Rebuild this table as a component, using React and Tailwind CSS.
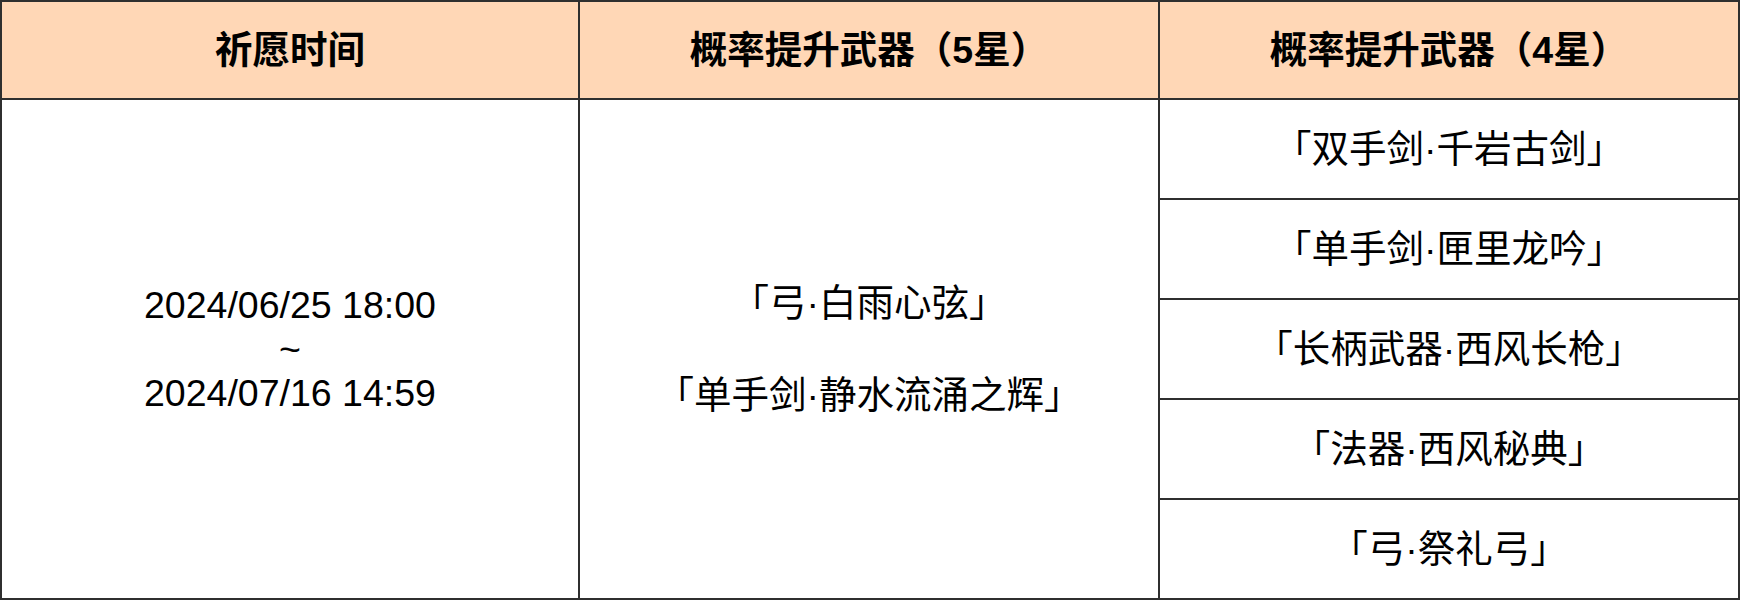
import React from 'react'

const font = { fontFamily: '"Liberation Sans", "Noto Sans CJK SC", sans-serif' }

const fourStar = [
  '「双手剑·千岩古剑」',
  '「单手剑·匣里龙吟」',
  '「长柄武器·西风长枪」',
  '「法器·西风秘典」',
  '「弓·祭礼弓」',
]

const App = () => {
  return (
    <div
      style={font}
      className="w-[1740px] h-[600px] border-2 border-[#2f2f2f] flex flex-col text-black bg-white"
    >
      <div className="h-[98px] border-b-2 border-[#2f2f2f] bg-[#ffd7b6] grid grid-cols-[578px_580px_1fr] text-[37.5px] font-bold">
        <div className="flex items-center justify-center border-r-2 border-[#2f2f2f]">祈愿时间</div>
        <div className="flex items-center justify-center border-r-2 border-[#2f2f2f]">概率提升武器（5星）</div>
        <div className="flex items-center justify-center">概率提升武器（4星）</div>
      </div>

      <div className="flex-1 grid grid-cols-[578px_580px_1fr] text-[37.5px]">
        <div className="flex flex-col items-center justify-center border-r-2 border-[#2f2f2f] leading-[44px]">
          <p>2024/06/25 18:00</p>
          <p>~</p>
          <p>2024/07/16 14:59</p>
        </div>
        <div className="flex flex-col items-center justify-center gap-[46px] border-r-2 border-[#2f2f2f] leading-[46px]">
          <p>「弓·白雨心弦」</p>
          <p>「单手剑·静水流涌之辉」</p>
        </div>
        <div className="flex flex-col">
          {fourStar.map((name, i) => (
            <div
              key={name}
              className={
                i < fourStar.length - 1
                  ? 'h-[100px] flex items-center justify-center border-b-2 border-[#2f2f2f]'
                  : 'flex-1 flex items-center justify-center'
              }
            >
              {name}
            </div>
          ))}
        </div>
      </div>
    </div>
  )
}

export default App
